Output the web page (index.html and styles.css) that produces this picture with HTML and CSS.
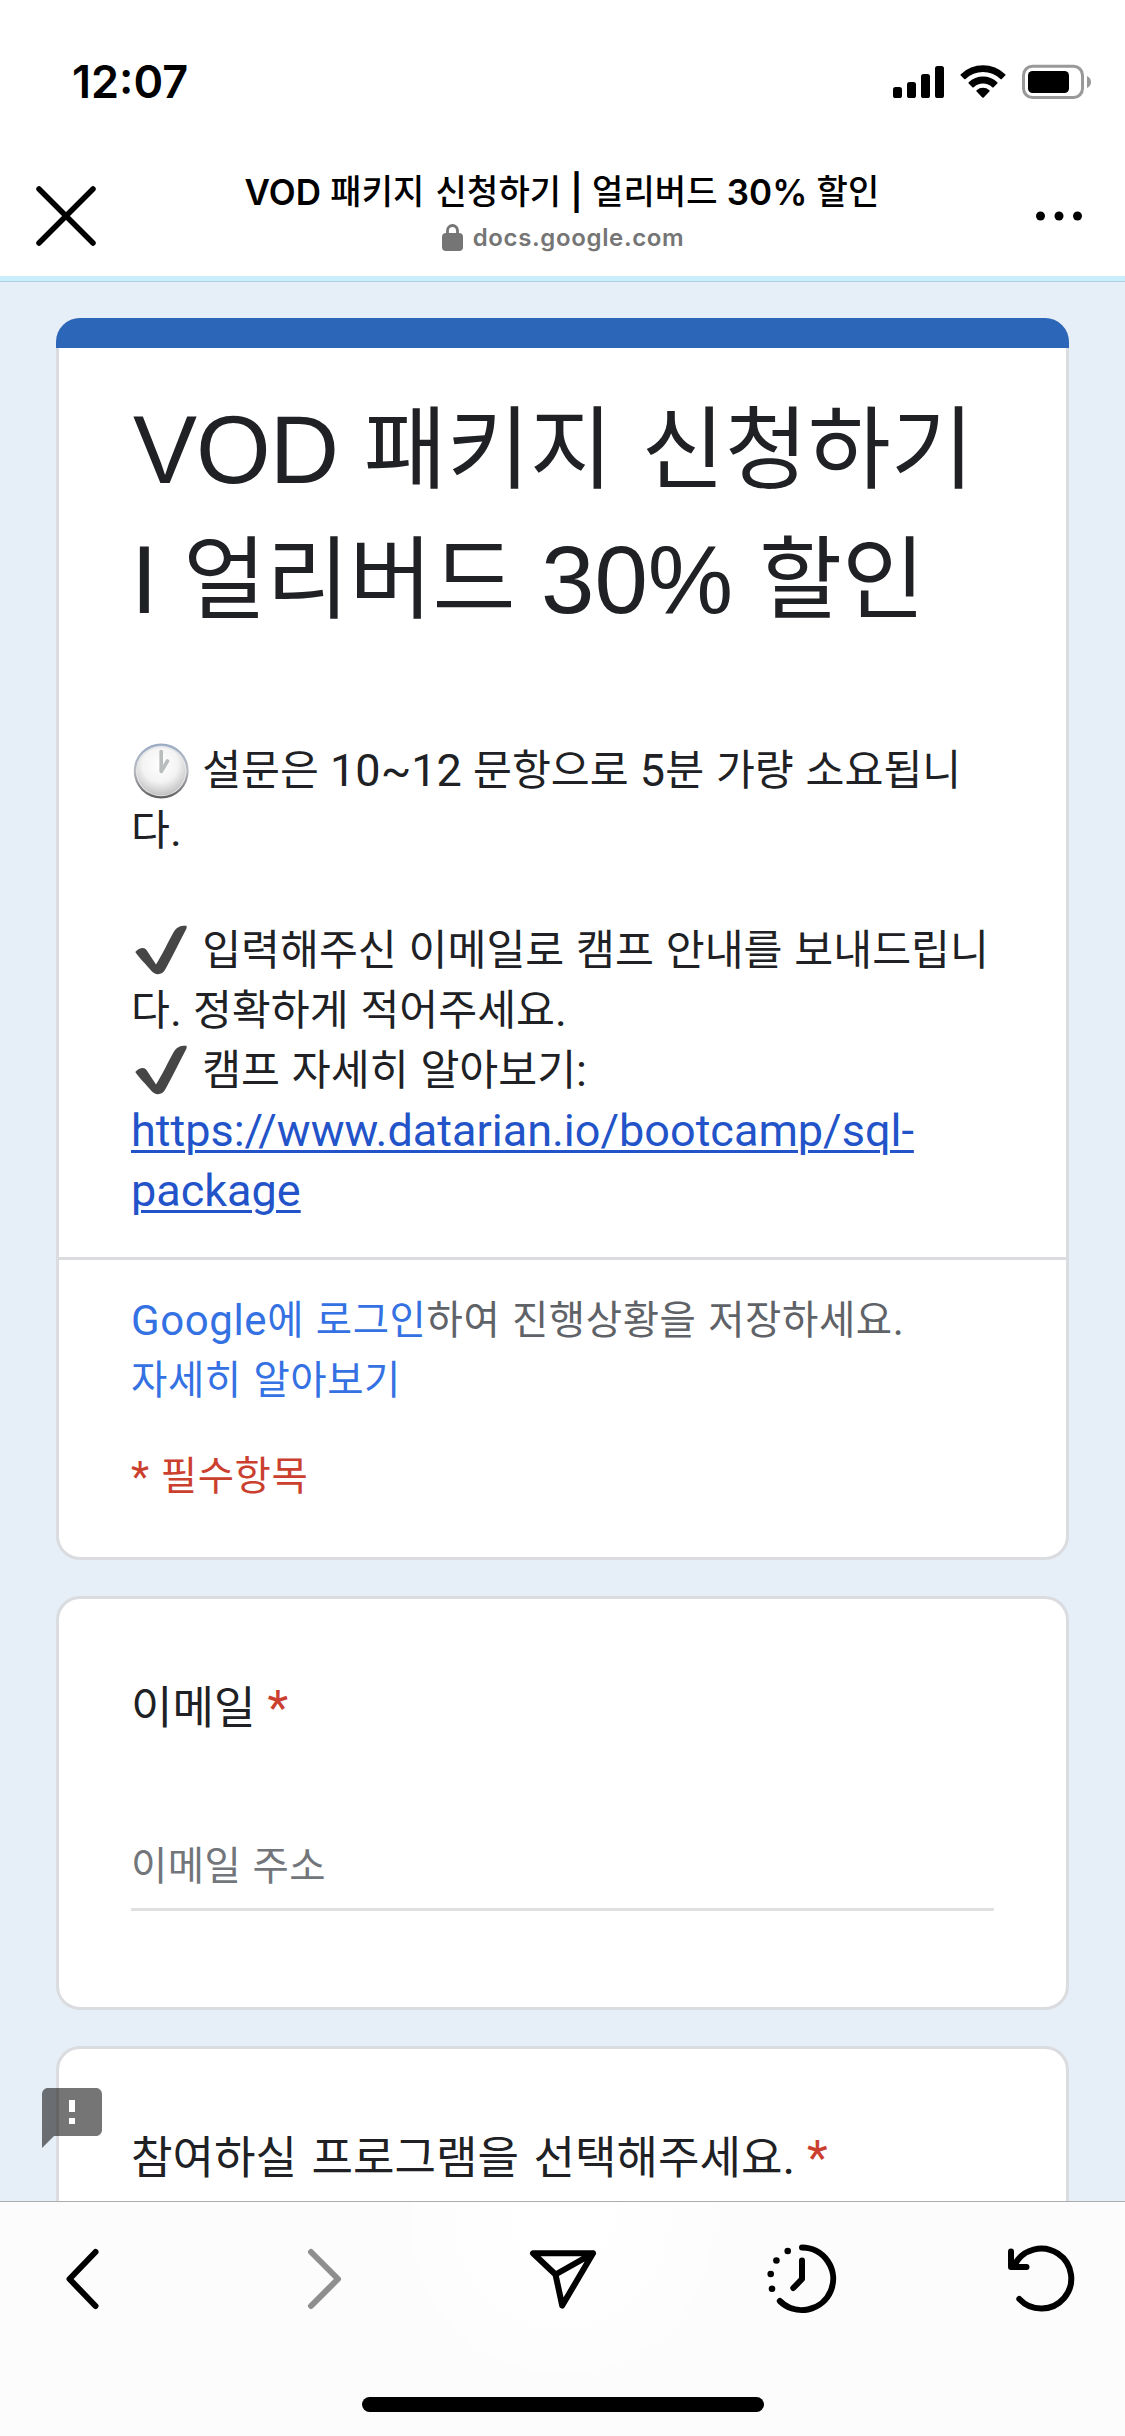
FILE: index.html
```html
<!DOCTYPE html>
<html lang="ko">
<head>
<meta charset="utf-8">
<title>VOD 패키지 신청하기 | 얼리버드 30% 할인</title>
<link rel="stylesheet" href="styles.css">
</head>
<body>
<div class="screen">
  <div class="status-bar">
    <span class="time">12:07</span>
    <svg class="status-icons" width="200" height="36" viewBox="892 64 200 36">
      <rect x="893" y="87" width="9" height="11" rx="2.6"/>
      <rect x="907" y="82" width="9" height="16" rx="2.6"/>
      <rect x="921" y="74" width="9" height="24" rx="2.6"/>
      <rect x="935" y="66" width="9" height="32" rx="2.6"/>
      <path d="M960.8 74.2a32 32 0 0 1 44.4 0a1 1 0 0 1 0 1.4l-3.4 3.4a1 1 0 0 1-1.4 0a25.200 25.200 0 0 0-34.800 0a1 1 0 0 1-1.4 0l-3.4-3.400a1 1 0 0 1 0-1.4z"/>
      <path d="M968.700 82.200a21 21 0 0 1 28.600 0a1 1 0 0 1 0 1.400l-3.700 3.600a1 1 0 0 1-1.400 0a13.500 13.500 0 0 0-18.400 0a1 1 0 0 1-1.400 0l-3.700-3.600a1 1 0 0 1 0-1.400z"/>
      <path d="M976.600 90.200a9.800 9.800 0 0 1 12.800 0a1 1 0 0 1 0 1.400l-5.700 5.900a1 1 0 0 1-1.400 0l-5.700-5.900a1 1 0 0 1 0-1.400z"/>
      <rect x="1023.500" y="66.200" width="59" height="31.300" rx="9" fill="none" stroke="#999" stroke-width="3"/>
      <rect x="1028" y="71" width="41" height="22" rx="4.500"/>
      <path d="M1087 76q4 2 4 6t-4 6z" fill="#999"/>
    </svg>
  </div>

  <header class="nav-bar">
    <svg class="close" width="60" height="60" viewBox="36 186 60 60"><path d="M39 189l54 54M93 189l-54 54"/></svg>
    <div class="page-info">
      <div class="page-title">VOD <span class="ko">패키지 신청하기</span> | <span class="ko">얼리버드</span> 30% <span class="ko">할인</span></div>
      <div class="domain">
        <svg width="21" height="28" viewBox="0 0 21 28"><rect x="0" y="9" width="21" height="18" rx="4"/><path d="M5.500 10V6.500a5 5 0 0 1 10 0V10" fill="none" stroke="#757575" stroke-width="2.800"/></svg>
        <span>docs.google.com</span>
      </div>
    </div>
    <svg class="more" width="48" height="10" viewBox="0 0 48 10"><circle cx="5.500" cy="5" r="4.500"/><circle cx="24" cy="5" r="4.500"/><circle cx="42.500" cy="5" r="4.500"/></svg>
  </header>
  <div class="load-progress"></div>

  <main class="form">
    <section class="card intro">
      <div class="accent"></div>
      <h1><span class="caps">VOD</span> <span class="ko">패키지 신청하기</span><br>I <span class="ko">얼리버드</span> 30% <span class="ko">할인</span></h1>
      <div class="description">
        <svg class="emoji" width="60" height="60" viewBox="0 0 60 60">
          <defs>
            <linearGradient id="rim" x1="0" y1="0" x2="0" y2="1"><stop offset="0" stop-color="#9aabc4"/><stop offset=".5" stop-color="#b9bbc0"/><stop offset="1" stop-color="#5c5c5c"/></linearGradient>
            <radialGradient id="face" cx=".48" cy=".35" r=".68"><stop offset="0" stop-color="#fff"/><stop offset=".55" stop-color="#f3f3f3"/><stop offset="1" stop-color="#bcbcbc"/></radialGradient>
          </defs>
          <circle cx="30.200" cy="30" r="27.500" fill="url(#rim)"/>
          <circle cx="30.200" cy="30" r="25.300" fill="#e4e6e9"/>
          <circle cx="30.200" cy="30.500" r="24" fill="url(#face)"/>
          <path d="M30.200 10.500V30.500L36.500 20" fill="none" stroke="#b8bcbc" stroke-width="3.600" stroke-linecap="round" stroke-linejoin="round"/>
        </svg> <span class="ko">설문은</span> 10~12 <span class="ko">문항으로</span> 5<span class="ko">분 가량 소요됩니<br>다</span>.<br><br>
        <svg class="emoji" width="60" height="60" viewBox="0 0 60 60"><path class="tick" d="M4.300 31C8 26.500 13.500 25.500 15.500 29L25 43.500C31 34 37 21 43 10.500C46 5.500 50 4.500 55.500 4.700C56 6 55.500 7.500 54.500 9.500C48 22 41 36 34.500 48C31.500 54.500 24 54.500 20.500 50C14 42 9 38 4.300 31Z"/></svg> <span class="ko">입력해주신 이메일로 캠프 안내를 보내드립니<br>다</span>. <span class="ko">정확하게 적어주세요</span>.<br>
        <svg class="emoji" width="60" height="60" viewBox="0 0 60 60"><path class="tick" d="M4.300 31C8 26.500 13.500 25.500 15.500 29L25 43.500C31 34 37 21 43 10.500C46 5.500 50 4.500 55.500 4.700C56 6 55.500 7.500 54.500 9.500C48 22 41 36 34.500 48C31.500 54.500 24 54.500 20.500 50C14 42 9 38 4.300 31Z"/></svg> <span class="ko">캠프 자세히 알아보기</span>:<br>
        <a href="#">https://www.datarian.io/bootcamp/sql-<br>package</a>
      </div>
      <div class="sign-in">
        <p><span class="link">Google<span class="ko">에 로그인</span></span><span class="ko">하여 진행상황을 저장하세요</span>.<br><span class="link ko">자세히 알아보기</span></p>
        <p class="required-note">* <span class="ko">필수항목</span></p>
      </div>
    </section>

    <section class="card question">
      <h2><span class="ko">이메일</span><span class="star">*</span></h2>
      <div class="field"><span class="ko">이메일 주소</span></div>
    </section>

    <section class="card question">
      <h2><span class="ko">참여하실 프로그램을 선택해주세요</span>.<span class="star">*</span></h2>
    </section>

    <svg class="feedback" width="72" height="72" viewBox="0 0 24 24"><path fill="#000" fill-opacity=".54" d="M20 2H4c-1.100 0-1.990.9-1.990 2L2 22l4-4h14c1.100 0 2-.9 2-2V4c0-1.100-.9-2-2-2z"/><path fill="#fff" d="M11 6h2v4h-2zM11 12h2v2h-2z"/></svg>
  </main>

  <footer class="toolbar">
    <svg width="1125" height="120" viewBox="0 2220 1125 120">
      <path d="M95.500 2252L69.500 2279L95.500 2306"/>
      <path class="disabled" d="M311 2252L338 2279L311 2306"/>
      <path d="M533 2253.300H593L562.200 2305.500L555.500 2274.500ZM555.500 2274.500L593 2253.300"/>
      <path d="M802 2247.500A31.300 31.300 0 1 1 779.800 2301M802 2260.500V2279L793.300 2288"/>
      <g class="dots"><circle cx="787.700" cy="2251" r="3.300"/><circle cx="776.400" cy="2260.500" r="3.300"/><circle cx="770.700" cy="2274" r="3.300"/><circle cx="772" cy="2288.700" r="3.300"/></g>
      <path d="M1019.300 2299A30 30 0 1 0 1014.500 2265M1011 2251.500V2267H1026.500"/>
    </svg>
    <div class="home-indicator"></div>
  </footer>
</div>
</body>
</html>
```
FILE: styles.css
```css
* { box-sizing: border-box; }
body { margin: 0; background: #fff; }
h1, h2, p { margin: 0; font-weight: 400; }
svg { display: block; flex: none; }

.screen {
  width: 1125px;
  height: 2436px;
  display: flex;
  flex-direction: column;
  overflow: hidden;
  white-space: nowrap;
}

/* Hangul runs slightly smaller than the Latin text beside them */
.ko {
  font-family: "Noto Sans CJK KR", sans-serif;
  font-size: .94em;
  line-height: 0;
  vertical-align: 1px;
}

.status-bar {
  height: 132px;
  padding: 0 33px 0 72px;
  display: flex;
  align-items: flex-start;
  justify-content: space-between;
}
.time { margin-top: 55px; font: 600 45px/54px Inter, sans-serif; }
.status-icons { margin-top: 64px; }

.nav-bar {
  height: 144px;
  padding: 0 42px 0 36px;
  display: grid;
  grid-template-columns: 60px 1fr 48px;
  justify-items: center;
}
.close { margin-top: 54px; fill: none; stroke: #000; stroke-width: 5.5; stroke-linecap: round; }
.more { margin-top: 79px; }
.page-info { padding: 39px 7px 0 0; }
.page-title { font: 600 35px/42px Inter, sans-serif; text-align: center; letter-spacing: .15px; }
.page-title .ko { font-size: 34px; font-weight: 500; word-spacing: .04em; }
.domain {
  margin: 10px 0 0 2px;
  display: flex;
  justify-content: center;
  gap: 10px;
  color: #757575;
  fill: #757575;
  font: 600 24px/30px Inter, sans-serif;
  letter-spacing: .65px;
}
.domain svg { margin-top: 1px; }
.load-progress { height: 6px; background: #c9effc; border-bottom: 1px solid #acd0dd; }

.form {
  position: relative;
  flex: 1;
  min-height: 0;
  overflow: hidden;
  padding: 36px 56px 0;
  background: #e6eef8;
  font-family: Roboto, "Noto Sans CJK KR", sans-serif;
  color: #202124;
}
.card {
  background: #fff;
  border: 3px solid #dadce0;
  border-radius: 24px;
  margin-bottom: 36px;
}
.intro { height: 1242px; }
.accent { height: 30px; margin: -3px -3px 0; background: #2b66b9; border-radius: 24px 24px 0 0; }
h1 {
  padding: 37px 0 0 72px;
  font: 400 96px/129.600px "Liberation Sans", "Noto Sans CJK KR", sans-serif;
  word-spacing: -1px;
}
.caps { margin-left: 2px; letter-spacing: -1px; }
h1 .ko { word-spacing: .04em; vertical-align: 2px; }
.description {
  height: 613px;
  padding: 97px 0 0 72px;
  font-size: 45px;
  line-height: 60px;
}
.emoji { display: inline-block; margin: -10px 0; vertical-align: -14px; transform: translateY(-9px); }
.tick { fill: #464646; }
.description a { color: #2253c9; text-decoration-thickness: 3px; text-underline-offset: 4px; }
.sign-in {
  border-top: 3px solid #dadce0;
  padding: 31px 0 0 72px;
  font-size: 42px;
  line-height: 60px;
  letter-spacing: .6px;
  color: #5f6368;
}
.link { color: #3471e3; }
.required-note { margin-top: 36px; color: #cb3f2f; }

.question { height: 414px; padding: 73px 72px 0; }
h2 { font-size: 48px; line-height: 72px; }
h2 .ko { vertical-align: 0; word-spacing: .04em; }
.star { margin-left: 12px; color: #cb3f2f; }
.field {
  margin-top: 93px;
  height: 74px;
  border-bottom: 3px solid #e0e0e0;
  font-size: 42px;
  line-height: 60px;
  letter-spacing: .4px;
  color: #72767b;
}
.feedback { position: absolute; left: 36px; top: 1800px; }

.toolbar {
  height: 235px;
  border-top: 1px solid #aaacae;
  background: radial-gradient(circle at 562px 20px, #fff 0, #fdfdfd 150px, #fcfcfc 152px);
}
.toolbar svg {
  margin-top: 18px;
  fill: none;
  stroke: #000;
  stroke-width: 6;
  stroke-linecap: round;
  stroke-linejoin: round;
}
.toolbar .disabled { stroke: #8e8e8e; }
.toolbar .dots { fill: #000; stroke: none; }
.home-indicator { width: 402px; height: 15px; margin: 57px auto 0; border-radius: 8px; background: #000; }
```
